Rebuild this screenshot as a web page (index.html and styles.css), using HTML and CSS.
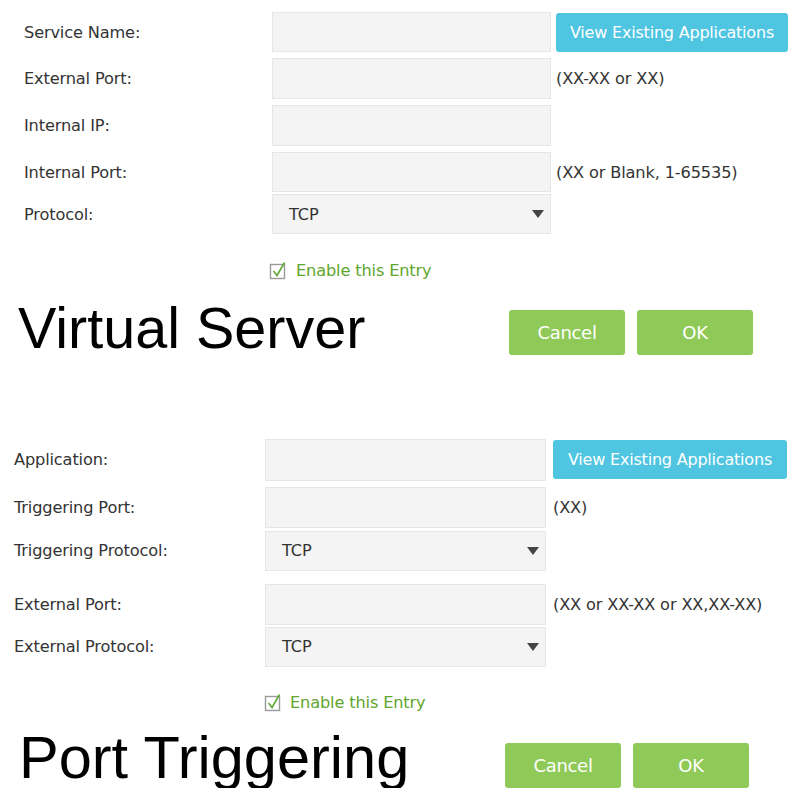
FILE: index.html
```html
<!DOCTYPE html>
<html lang="en">
<head>
    <meta charset="UTF-8">
    <meta name="viewport" content="width=device-width, initial-scale=1.0">
    <title>Virtual Server / Port Triggering</title>
    <link rel="stylesheet" href="styles.css">
</head>
<body>
    <!-- Virtual Server -->
    <section class="panel panel-vs">
        <div class="row r1">
            <label class="label">Service Name:</label>
            <div class="field"></div>
            <button class="btn-view">View Existing Applications</button>
        </div>
        <div class="row r2">
            <label class="label">External Port:</label>
            <div class="field"></div>
            <span class="hint">(XX-XX or XX)</span>
        </div>
        <div class="row r3">
            <label class="label">Internal IP:</label>
            <div class="field"></div>
        </div>
        <div class="row r4">
            <label class="label">Internal Port:</label>
            <div class="field"></div>
            <span class="hint">(XX or Blank, 1-65535)</span>
        </div>
        <div class="row r5">
            <label class="label">Protocol:</label>
            <div class="field select"><span>TCP</span><i class="caret"></i></div>
        </div>
        <div class="check-row">
            <svg class="check" width="18" height="19" viewBox="0 0 18 19">
                <rect x="1.5" y="3.5" width="14" height="14" fill="#fff" stroke="#9a9a9a" stroke-width="1.4"/>
                <path d="M4.5 10 L8 14.5 L15.5 1.5" fill="none" stroke="#62a834" stroke-width="1.6"/>
            </svg>
            <span>Enable this Entry</span>
        </div>
        <div class="title-row">
            <h1 class="title">Virtual Server</h1>
            <div class="actions">
                <button class="btn-green">Cancel</button>
                <button class="btn-green">OK</button>
            </div>
        </div>
    </section>

    <!-- Port Triggering -->
    <section class="panel panel-pt">
        <div class="row r1">
            <label class="label">Application:</label>
            <div class="field"></div>
            <button class="btn-view">View Existing Applications</button>
        </div>
        <div class="row r2">
            <label class="label">Triggering Port:</label>
            <div class="field"></div>
            <span class="hint">(XX)</span>
        </div>
        <div class="row r3">
            <label class="label">Triggering Protocol:</label>
            <div class="field select"><span>TCP</span><i class="caret"></i></div>
        </div>
        <div class="row r4">
            <label class="label">External Port:</label>
            <div class="field"></div>
            <span class="hint">(XX or XX-XX or XX,XX-XX)</span>
        </div>
        <div class="row r5">
            <label class="label">External Protocol:</label>
            <div class="field select"><span>TCP</span><i class="caret"></i></div>
        </div>
        <div class="check-row">
            <svg class="check" width="18" height="19" viewBox="0 0 18 19">
                <rect x="1.5" y="3.5" width="14" height="14" fill="#fff" stroke="#9a9a9a" stroke-width="1.4"/>
                <path d="M4.5 10 L8 14.5 L15.5 1.5" fill="none" stroke="#62a834" stroke-width="1.6"/>
            </svg>
            <span>Enable this Entry</span>
        </div>
        <div class="title-row">
            <h1 class="title">Port Triggering</h1>
            <div class="actions">
                <button class="btn-green">Cancel</button>
                <button class="btn-green">OK</button>
            </div>
        </div>
    </section>
</body>
</html>
```

FILE: styles.css
```css
body {
    margin: 0;
    background: #fff;
    font-family: 'DejaVu Sans', Verdana, sans-serif;
    font-size: 16.2px;
    color: #333;
    letter-spacing: -0.15px;
}
.panel {
    display: flex;
    flex-direction: column;
}
.row {
    display: flex;
    align-items: center;
    height: 40px;
}
.label {
    box-sizing: border-box;
}
.field {
    box-sizing: border-box;
    height: 100%;
    background: #f4f4f4;
    border: 1px solid #e6e6e6;
}
.select {
    display: flex;
    align-items: center;
    justify-content: space-between;
    padding: 0 6px 0 16px;
}
.caret {
    width: 0;
    height: 0;
    border-left: 6px solid transparent;
    border-right: 6px solid transparent;
    border-top: 8px solid #444;
}
.hint {
    white-space: nowrap;
}
.btn-view {
    height: 39px;
    border: none;
    border-radius: 3px;
    background: #4fc5e1;
    color: #fff;
    font-family: inherit;
    font-size: 16px;
    letter-spacing: -0.2px;
    padding: 0;
}
.check-row {
    display: flex;
    align-items: center;
    height: 20px;
    color: #5fa62e;
}
.check {
    margin-right: 9px;
}
.title-row {
    display: flex;
    align-items: flex-start;
}
.title {
    margin: 0;
    font-family: 'Liberation Sans', Arial, sans-serif;
    font-weight: normal;
    line-height: 1;
    color: #000;
    letter-spacing: 0;
    box-sizing: border-box;
    flex-shrink: 0;
}
.actions {
    display: flex;
    gap: 12px;
}
.btn-green {
    width: 116px;
    height: 45px;
    border: none;
    border-radius: 3px;
    background: #8fc957;
    color: #fff;
    font-family: inherit;
    font-size: 18px;
    letter-spacing: -0.3px;
    padding: 0;
}

/* Virtual Server */
.panel-vs {
    padding-top: 12px;
}
.panel-vs .label {
    width: 272px;
    padding-left: 24px;
}
.panel-vs .field {
    width: 279px;
}
.panel-vs .hint,
.panel-vs .btn-view {
    margin-left: 5px;
}
.panel-vs .btn-view {
    width: 232px;
}
.panel-vs .r2 { margin-top: 6px; height: 41px; }
.panel-vs .r3 { margin-top: 6px; height: 41px; }
.panel-vs .r4 { margin-top: 6px; }
.panel-vs .r5 { margin-top: 2px; }
.panel-vs .check-row {
    margin-top: 26px;
    padding-left: 269px;
}
.panel-vs .title-row {
    margin-top: 20px;
}
.panel-vs .title {
    font-size: 57.5px;
    width: 509px;
    padding-left: 18px;
}
.panel-vs .actions {
    margin-top: 10px;
}

/* Port Triggering */
.panel-pt {
    margin-top: 81px;
}
.panel-pt .label {
    width: 265px;
    padding-left: 14px;
}
.panel-pt .field {
    width: 281px;
}
.panel-pt .hint,
.panel-pt .btn-view {
    margin-left: 7px;
}
.panel-pt .btn-view {
    width: 234px;
}
.panel-pt .r1 { height: 42px; }
.panel-pt .r2 { margin-top: 6px; height: 41px; }
.panel-pt .r3 { margin-top: 3px; }
.panel-pt .r4 { margin-top: 13px; height: 41px; }
.panel-pt .r5 { margin-top: 2px; }
.panel-pt .check-row {
    margin-top: 26px;
    padding-left: 264px;
}
.panel-pt .check {
    margin-right: 8px;
}
.panel-pt .title-row {
    margin-top: 15px;
}
.panel-pt .title {
    font-size: 59.5px;
    width: 505px;
    padding-left: 19px;
}
.panel-pt .actions {
    margin-top: 15px;
}
```
